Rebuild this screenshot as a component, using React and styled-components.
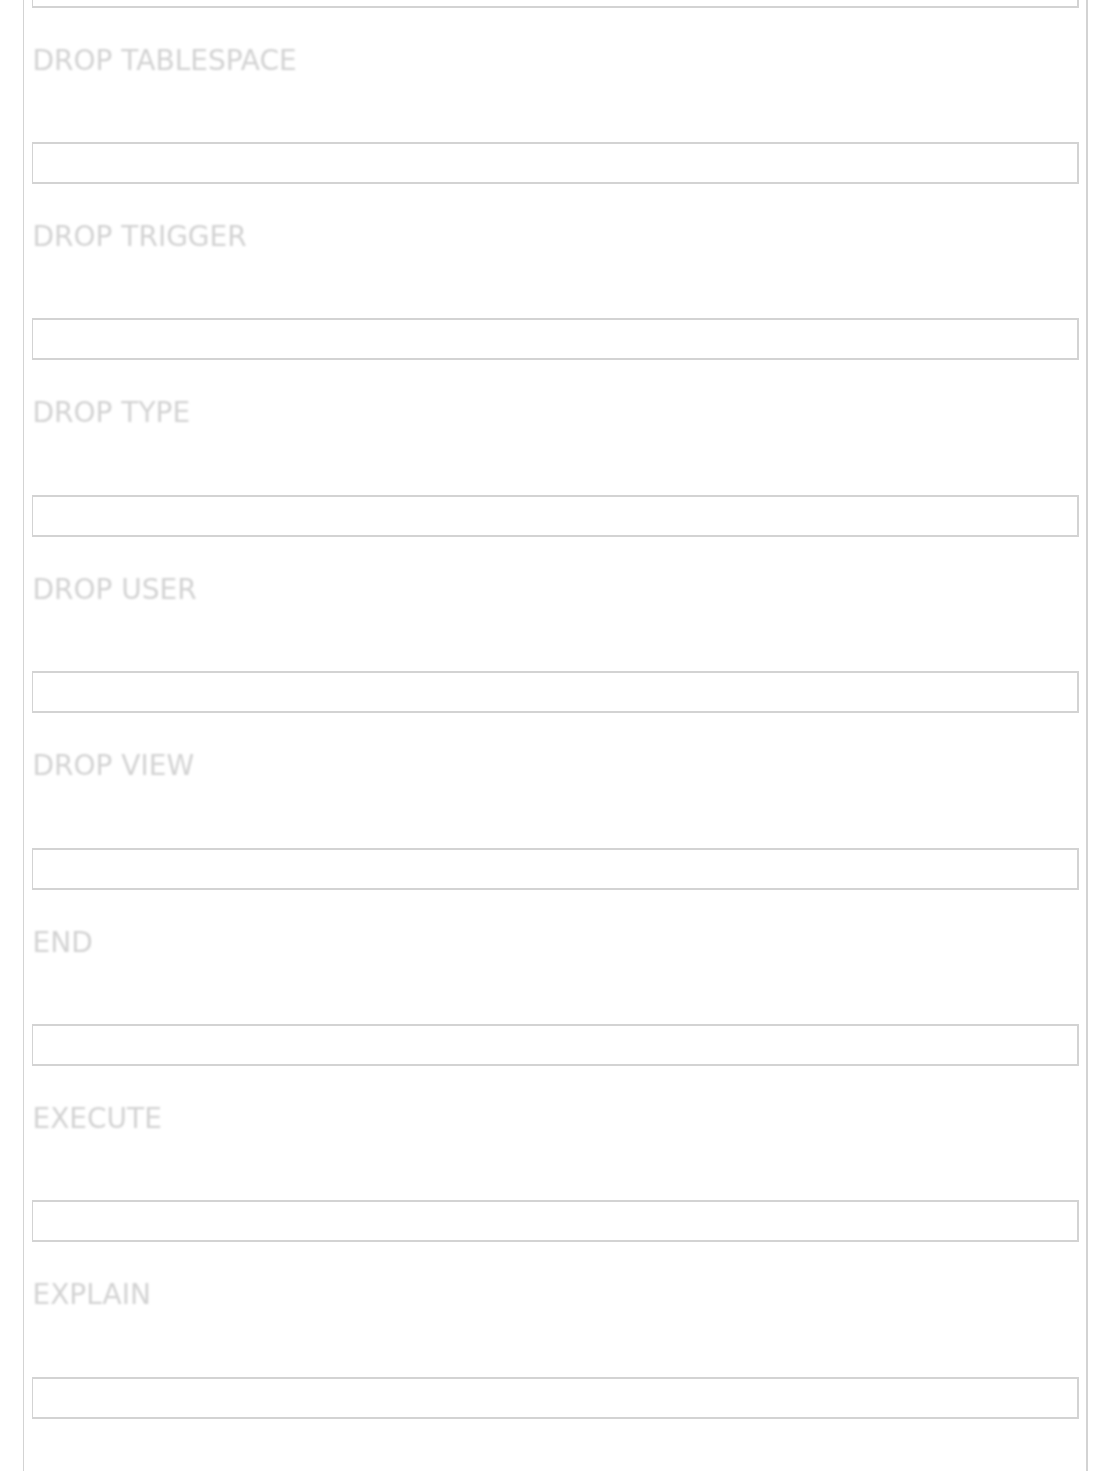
import React from 'react';
import styled, { createGlobalStyle } from 'styled-components';

const GlobalStyle = createGlobalStyle`
  html, body {
    margin: 0;
    padding: 0;
    background: #fff;
  }
  body {
    font-family: "DejaVu Sans", Verdana, sans-serif;
  }
`;

const Panel = styled.div`
  width: 1065px;
  box-sizing: border-box;
  margin: -34.5px auto 0;
  padding: 0 7px 40px 8px;
  border-left: 1px solid #d3d3d3;
  border-right: 2px solid #d3d3d3;
  min-height: 1520px;
`;

const Entry = styled.div`
  display: flex;
  flex-direction: column;
`;

const Keyword = styled.h3`
  margin: 37px 0 65.43px 1px;
  height: 32px;
  line-height: 32px;
  font-size: 28px;
  font-weight: normal;
  color: #d2d2d2;
  filter: blur(1.1px);
  white-space: nowrap;
`;

const Field = styled.input`
  display: block;
  box-sizing: border-box;
  width: 100%;
  height: 42px;
  margin: 0;
  padding: 0 8px;
  border: 2px solid #d3d3d3;
  border-left-width: 1px;
  background: #fff;
  font: inherit;
  outline: none;
`;

const keywords = [
  'DROP TABLESPACE',
  'DROP TRIGGER',
  'DROP TYPE',
  'DROP USER',
  'DROP VIEW',
  'END',
  'EXECUTE',
  'EXPLAIN',
];

export default function App() {
  return (
    <>
      <GlobalStyle />
      <Panel>
        <Field aria-label="DROP SYNONYM" />
        {keywords.map((k) => (
          <Entry key={k}>
            <Keyword>{k}</Keyword>
            <Field aria-label={k} />
          </Entry>
        ))}
      </Panel>
    </>
  );
}
